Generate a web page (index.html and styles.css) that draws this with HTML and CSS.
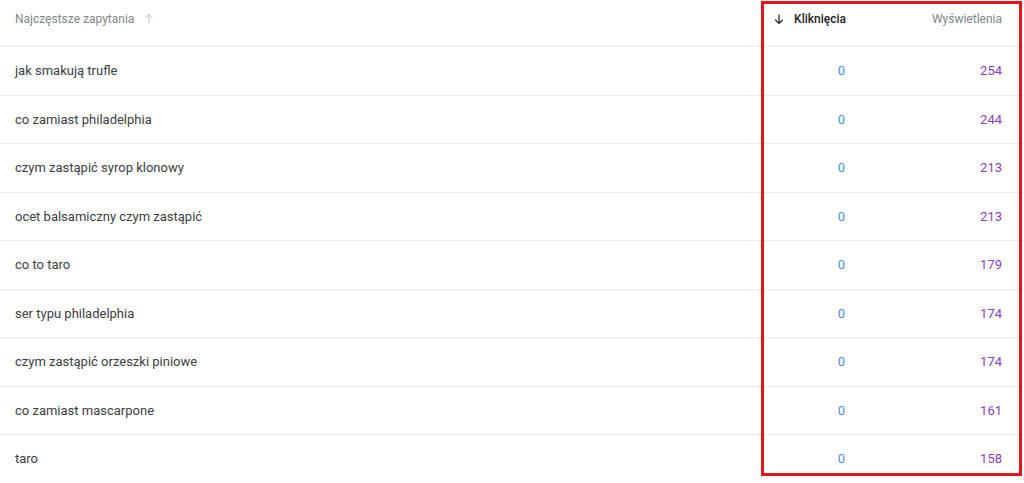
FILE: index.html
```html
<!DOCTYPE html>
<html lang="pl">
<head>
<meta charset="utf-8">
<link rel="stylesheet" href="styles.css">
</head>
<body>
<div class="table">
  <div class="row head">
    <div class="cell q"><span>Najczęstsze zapytania</span>
      <svg class="sort up" width="12" height="12" viewBox="0 0 24 24"><path d="M12 3 L5 10 M12 3 L19 10 M12 3 V21" fill="none" stroke="currentColor" stroke-width="2"/></svg>
    </div>
    <div class="cell n active">
      <svg class="sort down" width="12" height="12" viewBox="0 0 24 24"><path d="M12 21 L4.5 13.5 M12 21 L19.5 13.5 M12 21 V3" fill="none" stroke="currentColor" stroke-width="2.4"/></svg>
      <span>Kliknięcia</span>
    </div>
    <div class="cell n">Wyświetlenia</div>
  </div>
  <div class="row"><div class="cell q">jak smakują trufle</div><div class="cell n c">0</div><div class="cell n i">254</div></div>
  <div class="row"><div class="cell q">co zamiast philadelphia</div><div class="cell n c">0</div><div class="cell n i">244</div></div>
  <div class="row"><div class="cell q">czym zastąpić syrop klonowy</div><div class="cell n c">0</div><div class="cell n i">213</div></div>
  <div class="row"><div class="cell q">ocet balsamiczny czym zastąpić</div><div class="cell n c">0</div><div class="cell n i">213</div></div>
  <div class="row"><div class="cell q">co to taro</div><div class="cell n c">0</div><div class="cell n i">179</div></div>
  <div class="row"><div class="cell q">ser typu philadelphia</div><div class="cell n c">0</div><div class="cell n i">174</div></div>
  <div class="row"><div class="cell q">czym zastąpić orzeszki piniowe</div><div class="cell n c">0</div><div class="cell n i">174</div></div>
  <div class="row"><div class="cell q">co zamiast mascarpone</div><div class="cell n c">0</div><div class="cell n i">161</div></div>
  <div class="row"><div class="cell q">taro</div><div class="cell n c">0</div><div class="cell n i">158</div></div>
  <div class="highlight"></div>
</div>
</body>
</html>
```
FILE: styles.css
```css
html, body {
  margin: 0;
  padding: 0;
  background: #fff;
}
body {
  font-family: Roboto, "Liberation Sans", sans-serif;
  color: #3c4043;
  overflow: hidden;
}
.table {
  position: relative;
  width: 1024px;
}
.row {
  display: grid;
  grid-template-columns: 1fr 111px 155px;
  height: 47.5px;
  border-bottom: 1px solid #e8eaed;
  align-items: center;
  font-size: 13px;
}
.row.head {
  height: 46px;
  font-size: 12px;
  color: #80868b;
  align-items: start;
}
.row.head .cell {
  padding-top: 12px;
  display: flex;
  align-items: center;
}
.row.head .cell.n {
  justify-content: flex-end;
}
.cell.q {
  padding-left: 15px;
}
.cell.n {
  text-align: right;
  padding-right: 24px;
}
.cell.n:last-child {
  padding-right: 22px;
}
.row.head .active {
  color: #202124;
  font-weight: 500;
  gap: 9px;
  padding-right: 23px;
}
.sort {
  flex-shrink: 0;
}
.sort.up {
  color: #bdc1c6;
  margin-left: 9px;
}
.sort.down {
  color: #202124;
}
.c {
  color: #4a8ee8;
}
.i {
  color: #8e3cc0;
}
.highlight {
  position: absolute;
  left: 761px;
  top: 1px;
  width: 255px;
  height: 469px;
  border: 3px solid #e3141b;
  pointer-events: none;
}
```
